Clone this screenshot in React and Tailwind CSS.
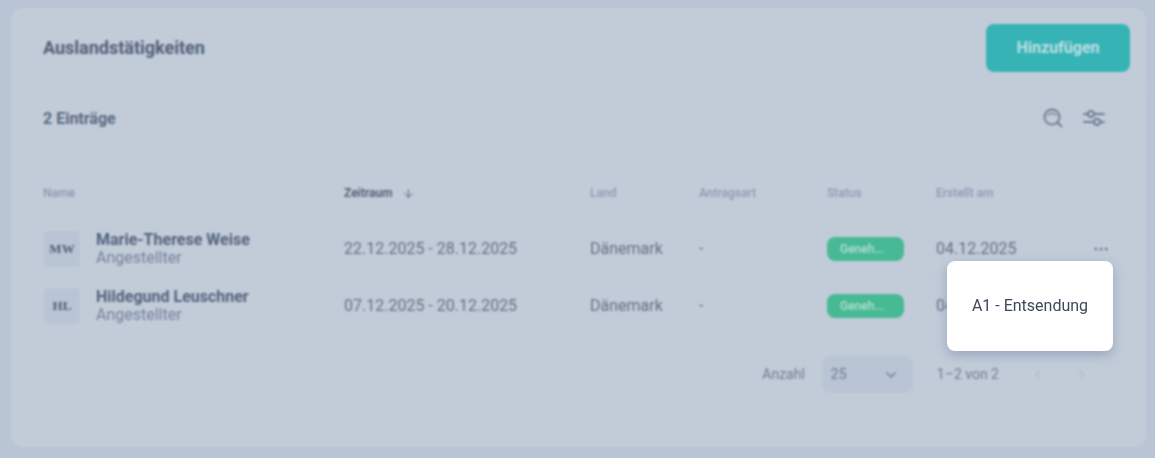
import React from 'react';
import { ArrowDown, ChevronDown, ChevronLeft, ChevronRight, MoreHorizontal } from 'lucide-react';

const rows = [
  { initials: 'MW', name: 'Marie-Therese Weise', period: '22.12.2025 - 28.12.2025', created: '04.12.2025' },
  { initials: 'HL', name: 'Hildegund Leuschner', period: '07.12.2025 - 20.12.2025', created: '04.12.2025' },
];

const gridCols = 'grid grid-cols-[301px_246px_109px_128px_109px_1fr] items-center';

const SearchIcon = () => (
  <svg width="22" height="22" viewBox="0 0 22 22" fill="none" stroke="currentColor" strokeWidth="1.9" strokeLinecap="round">
    <circle cx="10" cy="10" r="7.5" />
    <path d="M6 8.5c1-1.6 2.4-2.2 4-2.2s3 .6 4 2.2" strokeWidth="1.4" />
    <path d="M15.5 15.5l4 4" />
  </svg>
);

const FilterIcon = () => (
  <svg width="22" height="22" viewBox="0 0 22 22" fill="none" stroke="currentColor" strokeWidth="1.8" strokeLinecap="round">
    <path d="M1 7h4M11 7h10M1 15h10M17 15h4" />
    <circle cx="8" cy="7" r="3" />
    <circle cx="14" cy="15" r="3" />
  </svg>
);

export default function App() {
  return (
    <div className="relative h-screen overflow-hidden bg-[#b9c5d5] font-['Roboto',sans-serif]">
      {/* Blurred page behind the menu */}
      <div className="h-full pl-[11px] pr-[9px] pt-2 pb-[11px] blur-[0.8px]">
        <div className="h-full rounded-xl bg-[#c2ccd9]">
          <div className="flex h-20 items-center justify-between border-b border-[#bcc8d6] pl-8 pr-4">
            <h1 className="text-[18px] font-bold text-[#52617b]">Auslandstätigkeiten</h1>
            <button className="h-12 w-[144px] rounded-lg bg-[#35b3b5] text-[16px] font-bold text-[#bfdfe4]">Hinzufügen</button>
          </div>

          <div className="flex h-[60px] items-center justify-between pl-8 pr-[41px]">
            <span className="pt-0.5 text-[16px] font-bold text-[#5a6981]">2 Einträge</span>
            <div className="flex items-center gap-[19px] text-[#6f7b90]">
              <SearchIcon />
              <FilterIcon />
            </div>
          </div>

          <div className={`${gridCols} mt-[36px] pl-8 text-[12px] font-medium text-[#8c9ab2]`}>
            <span>Name</span>
            <span className="flex items-center gap-[10px] font-semibold text-[#535e73]">
              Zeitraum <ArrowDown size={13} strokeWidth={1.75} />
            </span>
            <span>Land</span>
            <span>Antragsart</span>
            <span>Status</span>
            <span>Erstellt am</span>
          </div>

          <div className="mt-[19px]">
            {rows.map((row, i) => (
              <div
                key={row.name}
                className={`${gridCols} ml-[17px] pl-[15px] text-[16px] text-[#646f83] ${i === 0 ? 'h-[56px] border-b border-[#bcc8d6]' : 'h-[57px]'}`}
              >
                <div className="flex items-center gap-4">
                  <div className="ml-px flex h-9 w-9 items-center justify-center rounded-sm bg-[#b9c5d5] font-['Liberation_Serif',serif] text-[13px] font-bold text-[#4e5b73]">
                    {row.initials}
                  </div>
                  <div className="leading-[18px]">
                    <div className="font-bold text-[#52617b]">{row.name}</div>
                    <div className="text-[#73809a]">Angestellter</div>
                  </div>
                </div>
                <span>{row.period}</span>
                <span>Dänemark</span>
                <span>-</span>
                <span className="flex h-6 w-[77px] items-center rounded-lg bg-[#47b994] pl-[13px] text-[12px] font-medium text-[#b5dfd4]">Geneh...</span>
                <div className="flex items-center justify-between pr-[36px]">
                  <span>{row.created}</span>
                  {i === 0 && <MoreHorizontal size={18} className="text-[#6f7b90]" />}
                </div>
              </div>
            ))}
          </div>

          <div className="mt-[22px] flex items-center justify-end pr-[56px] text-[14px] text-[#6f7b90]">
            <span>Anzahl</span>
            <div className="ml-[17px] flex h-[37px] w-[91px] items-center justify-between rounded-lg bg-[#b9c5d5] pl-[9px] pr-[14px]">
              <span>25</span>
              <ChevronDown size={16} />
            </div>
            <span className="ml-[24px]">1–2 von 2</span>
            <div className="ml-[31px] flex items-center gap-[28px] text-[#b0bccb]">
              <ChevronLeft size={16} />
              <ChevronRight size={16} />
            </div>
          </div>
        </div>
      </div>

      {/* Open menu */}
      <div className="absolute left-[947px] top-[261px] flex h-[90px] w-[166px] items-center justify-center rounded-lg bg-white text-[16px] text-[#3d4859] shadow-[0_4px_12px_rgba(100,120,155,0.45)]">
        A1 - Entsendung
      </div>
    </div>
  );
}
